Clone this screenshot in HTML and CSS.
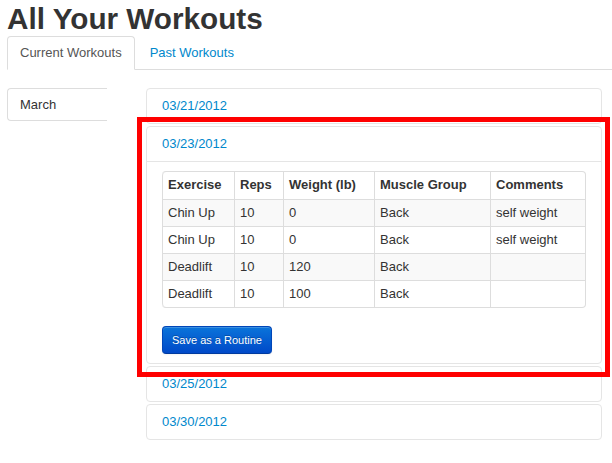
FILE: index.html
```html
<!DOCTYPE html>
<html>
<head>
<meta charset="utf-8">
<link rel="stylesheet" href="styles.css">
</head>
<body>
<div class="page">
  <h1 class="title">All Your Workouts</h1>
  <ul class="tabs">
    <li class="tab active"><a href="#">Current Workouts</a></li>
    <li class="tab"><a href="#">Past Workouts</a></li>
  </ul>
  <div class="content">
    <ul class="side">
      <li class="side-item"><a href="#">March</a></li>
    </ul>
    <div class="accordion">
      <div class="group">
        <div class="heading"><a href="#">03/21/2012</a></div>
      </div>
      <div class="group">
        <div class="heading"><a href="#">03/23/2012</a></div>
        <div class="inner">
          <table class="grid">
            <thead>
              <tr>
                <th class="c1">Exercise</th>
                <th class="c2">Reps</th>
                <th class="c3">Weight (lb)</th>
                <th class="c4">Muscle Group</th>
                <th class="c5">Comments</th>
              </tr>
            </thead>
            <tbody>
              <tr><td>Chin Up</td><td>10</td><td>0</td><td>Back</td><td>self weight</td></tr>
              <tr><td>Chin Up</td><td>10</td><td>0</td><td>Back</td><td>self weight</td></tr>
              <tr><td>Deadlift</td><td>10</td><td>120</td><td>Back</td><td></td></tr>
              <tr><td>Deadlift</td><td>10</td><td>100</td><td>Back</td><td></td></tr>
            </tbody>
          </table>
          <button class="btn">Save as a Routine</button>
        </div>
      </div>
      <div class="group">
        <div class="heading"><a href="#">03/25/2012</a></div>
      </div>
      <div class="group">
        <div class="heading"><a href="#">03/30/2012</a></div>
      </div>
    </div>
  </div>
</div>
<div class="highlight"></div>
</body>
</html>
```

FILE: styles.css
```css
* { box-sizing: border-box; }
html, body { margin: 0; padding: 0; background: #fff; }
body {
  font-family: "Liberation Sans", Arial, Helvetica, sans-serif;
  font-size: 13px;
  line-height: 18px;
  color: #333;
  width: 612px;
  height: 463px;
  overflow: hidden;
  position: relative;
}
a { color: #0088cc; text-decoration: none; }
.page { padding-left: 7px; }
.title {
  margin: 0;
  padding-top: 1px;
  height: 36px;
  font-size: 29.7px;
  line-height: 36px;
  font-weight: bold;
  color: #333;
}
.tabs {
  list-style: none;
  margin: 0 0 18px 0;
  padding: 0;
  display: flex;
  border-bottom: 1px solid #ddd;
  height: 34px;
}
.tab { margin-right: 2px; margin-bottom: -1px; }
.tab a {
  display: block;
  padding: 7px 12px 7px;
  line-height: 18px;
  border: 1px solid transparent;
  border-radius: 4px 4px 0 0;
}
.tab.active a {
  color: #555;
  background: #fff;
  border-color: #ddd #ddd transparent #ddd;
}
.content { display: flex; gap: 39px; align-items: flex-start; }
.side { list-style: none; margin: 0; padding: 0; width: 100px; }
.side-item a {
  display: block;
  padding: 7px 12px 6px;
  color: #333;
  border: 1px solid #ddd;
  border-right: 0;
  border-radius: 4px 0 0 4px;
}
.accordion { width: 456px; }
.group {
  border: 1px solid #e5e5e5;
  border-radius: 4px;
  margin-bottom: 2px;
}
.heading a {
  display: block;
  padding: 8px 15px;
  line-height: 18px;
}
.inner {
  border-top: 1px solid #e5e5e5;
  padding: 9px 15px 9px;
}
.grid {
  width: 424px;
  table-layout: fixed;
  border-collapse: separate;
  border-spacing: 0;
  border: 1px solid #ddd;
  border-left: 0;
  border-radius: 4px;
  margin-bottom: 18px;
}
.grid th, .grid td {
  text-align: left;
  padding: 4px 5px;
  line-height: 18px;
  border-left: 1px solid #ddd;
  border-top: 1px solid #ddd;
  vertical-align: top;
  white-space: nowrap;
}
.grid th { font-weight: bold; border-top: 0; padding-bottom: 5px; }
.grid th.c1 { width: 72px; }
.grid th.c2 { width: 49px; }
.grid th.c3 { width: 91px; }
.grid th.c4 { width: 116px; }
.grid th.c5 { width: 95px; }
.grid thead th:first-child { border-top-left-radius: 4px; }
.grid thead th:last-child { border-top-right-radius: 4px; }
.grid tbody tr:last-child td:first-child { border-bottom-left-radius: 4px; }
.grid tbody tr:last-child td:last-child { border-bottom-right-radius: 4px; }
.grid tbody tr:nth-child(odd) td { background: #f9f9f9; }
.btn {
  display: block;
  font-family: "Liberation Sans", Arial, Helvetica, sans-serif;
  font-size: 11px;
  line-height: 16px;
  padding: 5px 9px;
  height: 28px;
  color: #fff;
  text-shadow: 0 -1px 0 rgba(0,0,0,0.25);
  background: linear-gradient(#0a74da, #0049c8);
  border: 1px solid #0046b8;
  border-bottom-color: #003a9e;
  border-radius: 4px;
  box-shadow: inset 0 1px 0 rgba(255,255,255,0.2), 0 1px 2px rgba(0,0,0,0.05);
}
.highlight {
  position: absolute;
  left: 137px;
  top: 117px;
  width: 473px;
  height: 260px;
  border: 5px solid #ff0000;
  pointer-events: none;
}
```
